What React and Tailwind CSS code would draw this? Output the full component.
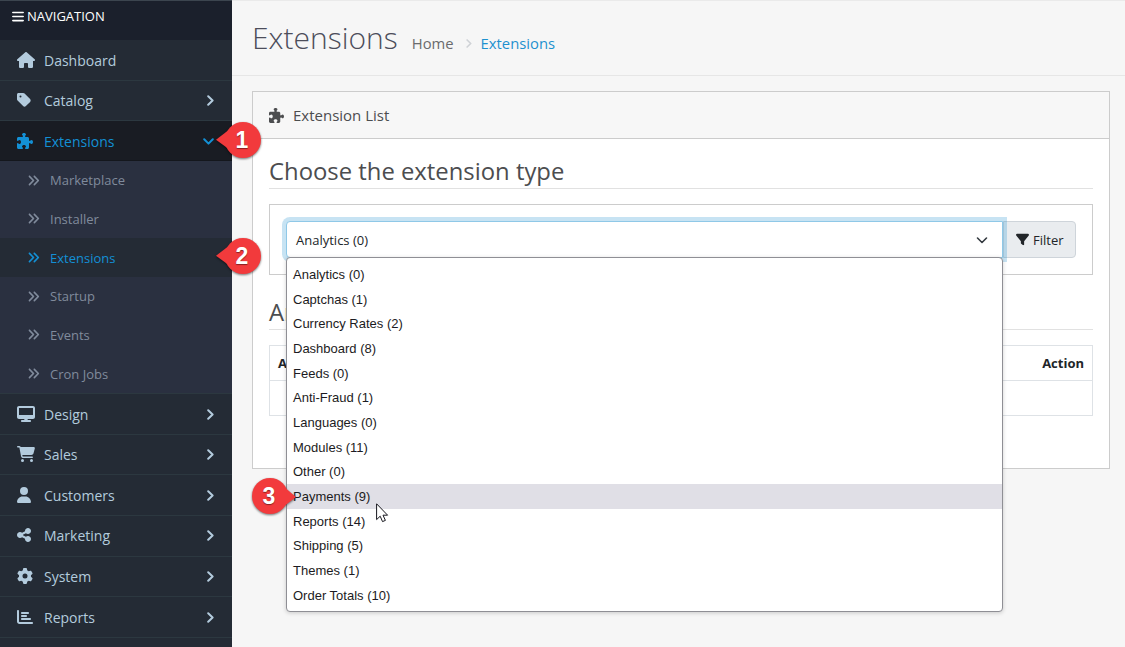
import {
  FaAnglesRight,
  FaBars,
  FaCartShopping,
  FaChartBar,
  FaDesktop,
  FaFilter,
  FaGear,
  FaHouse,
  FaPuzzlePiece,
  FaShareNodes,
  FaTag,
  FaUser,
} from "react-icons/fa6";

const topItems = [
  { label: "Dashboard", icon: FaHouse, size: "w-[18px] h-4", row: "h-[41px] pt-3", leaf: true },
  { label: "Catalog", icon: FaTag, size: "w-[14px] h-4", row: "h-10 pt-[11px]" },
  { label: "Extensions", icon: FaPuzzlePiece, size: "w-4 h-4", row: "h-10 pt-3", open: true },
];

const subItems = [
  { label: "Marketplace", row: "h-[38px]" },
  { label: "Installer", row: "h-[39px]" },
  { label: "Extensions", row: "h-[39px]", active: true },
  { label: "Startup", row: "h-[38px]" },
  { label: "Events", row: "h-[39px]" },
  { label: "Cron Jobs", row: "h-[39px]" },
];

const bottomItems = [
  { label: "Design", icon: FaDesktop, size: "w-[18px] h-4", row: "h-[41px] pt-3" },
  { label: "Sales", icon: FaCartShopping, size: "w-[18px] h-4", row: "h-10 pt-[11px]" },
  { label: "Customers", icon: FaUser, size: "w-[14px] h-4", row: "h-[41px] pt-3" },
  { label: "Marketing", icon: FaShareNodes, size: "w-[14px] h-4", row: "h-[41px] pt-[11px]" },
  { label: "System", icon: FaGear, size: "w-4 h-4", row: "h-10 pt-[11px]" },
  { label: "Reports", icon: FaChartBar, size: "w-4 h-4", row: "h-[41px] pt-3" },
];

const options = [
  "Analytics (0)",
  "Captchas (1)",
  "Currency Rates (2)",
  "Dashboard (8)",
  "Feeds (0)",
  "Anti-Fraud (1)",
  "Languages (0)",
  "Modules (11)",
  "Other (0)",
  "Payments (9)",
  "Reports (14)",
  "Shipping (5)",
  "Themes (1)",
  "Order Totals (10)",
];

function ChevronRight({ className }) {
  return (
    <svg viewBox="0 0 7 11" className={`fill-none stroke-current stroke-2 ${className}`}>
      <path d="M1.2 1.2 L5.6 5.5 L1.2 9.8" strokeLinecap="round" strokeLinejoin="round" />
    </svg>
  );
}

function ChevronDown({ className }) {
  return (
    <svg viewBox="0 0 11 7" className={`fill-none stroke-current stroke-2 ${className}`}>
      <path d="M1.2 1.2 L5.5 5.6 L9.8 1.2" strokeLinecap="round" strokeLinejoin="round" />
    </svg>
  );
}

function NavItem({ item }) {
  const Icon = item.icon;
  return (
    <div
      className={`flex shrink-0 items-start border-b pl-[17px] pr-[18px] ${item.row} ${
        item.open
          ? "border-[#14171d] bg-[#191c23] text-[#1390d5]"
          : "border-[#2c3840] bg-[#242b35] text-[#b3cbdd]"
      }`}
    >
      <span className="flex w-[27px] items-center">
        <Icon className={item.size} preserveAspectRatio="none" />
      </span>
      <span className="-mt-px flex-1 text-[14px] leading-5">{item.label}</span>
      <span className="flex h-4 items-center">
        {item.open ? (
          <ChevronDown className="h-[7px] w-[11px]" />
        ) : (
          !item.leaf && <ChevronRight className="h-[11px] w-[7px]" />
        )}
      </span>
    </div>
  );
}

function Marker({ n, right, className }) {
  return (
    <div className={`absolute h-10 w-[48px] ${className}`}>
      <svg viewBox="0 0 48 40" className="h-10 w-[48px] drop-shadow-[0_1px_1px_rgba(0,0,0,0.55)]">
        <g fill="#f23a3c" transform={right ? "translate(48 0) scale(-1 1)" : undefined}>
          <circle cx="28" cy="19" r="18" />
          <path d={right ? "M2 20 L15 9 L15 30 Z" : "M1 18.8 L15 8 L15 29 Z"} />
        </g>
      </svg>
      <span
        className={`absolute top-[5px] w-9 text-center font-['Liberation_Sans',sans-serif] text-[23px] font-bold leading-7 text-white [text-shadow:0_1px_1px_rgba(0,0,0,0.45)] ${
          right ? "left-[1px]" : "left-[9px]"
        }`}
      >
        {n}
      </span>
    </div>
  );
}

export default function App() {
  return (
    <div className="relative flex h-[647px] w-[1125px] overflow-hidden bg-[#f6f6f6] font-['Open_Sans',sans-serif] text-[#212529]">
      <nav className="flex w-[232px] shrink-0 flex-col bg-[#242b35]">
        <div className="flex h-10 shrink-0 items-center gap-[3px] border-t border-[#3c454f] bg-[#1b202c] pb-[9px] pl-3 text-white">
          <FaBars className="h-[13px] w-3" preserveAspectRatio="none" />
          <span className="text-[13px] leading-4">NAVIGATION</span>
        </div>
        {topItems.map((item) => (
          <NavItem key={item.label} item={item} />
        ))}
        <div className="flex shrink-0 flex-col border-b border-[#2c3840]">
          {subItems.map((item) => (
            <div
              key={item.label}
              className={`flex shrink-0 items-center pl-[27px] text-[13px] leading-5 ${item.row} ${
                item.active ? "bg-[#242b35] text-[#1390d5]" : "bg-[#2a3040] text-[#808b9c]"
              }`}
            >
              <FaAnglesRight className="mr-[10px] h-[13px] w-[13px]" />
              {item.label}
            </div>
          ))}
        </div>
        {bottomItems.map((item) => (
          <NavItem key={item.label} item={item} />
        ))}
      </nav>

      <main className="flex min-w-0 flex-1 flex-col">
        <header className="flex h-[76px] shrink-0 items-center border-b border-t border-b-[#e6e6e6] border-t-[#eaeaea] pl-5">
          <h1 className="text-[30px] font-light leading-9 text-[#4c4d5a]">Extensions</h1>
          <div className="ml-[14px] mt-[9px] flex items-center text-[14.8px] leading-5">
            <span className="text-[#6a6b6d]">Home</span>
            <ChevronRight className="ml-[12px] mr-[9px] mt-px h-[9px] w-[6px] text-[#cfd2d6]" />
            <span className="text-[#1e91cf]">Extensions</span>
          </div>
        </header>

        <section className="ml-5 mr-[15px] mt-[15px] flex h-[378px] flex-col border border-[#ccc] bg-white">
          <div className="flex h-[47px] shrink-0 items-center border-b border-[#ccc] bg-[#f7f7f7] pl-4 text-[15px] text-[#4c4d4f]">
            <FaPuzzlePiece className="mr-[9px] h-[15px] w-[15px]" />
            Extension List
          </div>
          <div className="flex flex-col px-4">
            <h2 className="mt-4 h-[34px] border-b border-[#e1e1e1] text-[23.85px] leading-[33px] text-[#4c4d4f]">
              Choose the extension type
            </h2>
            <div className="mt-[15px] flex h-[71px] items-start border border-[#ccc] p-4">
              <div className="relative z-10 flex h-[37px] w-[717px] items-center justify-between rounded-l-[4px] border border-[#8fc8e7] bg-white pl-[9px] pr-[14px] text-[13px] shadow-[0_0_0_4px_rgba(30,145,207,0.25)]">
                <span className="mt-[2px]">Analytics (0)</span>
                <svg viewBox="0 0 12 12" className="h-3 w-3 fill-none stroke-[#343a40] stroke-[1.6]">
                  <path d="M1.5 4 L6 8.5 L10.5 4" strokeLinecap="round" strokeLinejoin="round" />
                </svg>
              </div>
              <div className="flex h-[37px] w-[73px] items-center gap-1 rounded-r-[4px] border border-[#ced4da] bg-[#e9ecef] pl-3 text-[13px]">
                <FaFilter className="-mt-px h-[13px] w-[13px]" />
                <span className="mt-[2px]">Filter</span>
              </div>
            </div>
            <h2 className="mt-[21px] h-[34px] border-b border-[#e1e1e1] text-[23.85px] leading-[33px] text-[#4c4d4f]">
              Analytics
            </h2>
            <div className="mt-[15px] flex h-[71px] flex-col border border-[#dee2e6]">
              <div className="flex h-[35px] items-center justify-between border-b border-[#dee2e6] px-2 pt-[2px] text-[13px] font-bold">
                <span>Analytics Name</span>
                <span>Action</span>
              </div>
            </div>
          </div>
        </section>
      </main>

      <div className="absolute left-[286px] top-[257px] z-20 h-[355px] w-[717px] rounded-[4px] border border-[#8f8f95] bg-white pt-[4px] font-['Liberation_Sans',sans-serif] text-[13px] text-[#1c1b22] shadow-[0_1px_4px_rgba(0,0,0,0.18)]">
        {options.map((option) => (
          <div
            key={option}
            className={`flex h-[24.68px] items-center pl-[6px] pt-px ${
              option === "Payments (9)" && "bg-[#e0dfe6]"
            }`}
          >
            {option}
          </div>
        ))}
      </div>

      <Marker n="1" className="left-[215px] top-[121px] z-30" />
      <Marker n="2" className="left-[215px] top-[237px] z-30" />
      <Marker n="3" right className="left-[250px] top-[477px] z-30" />

      <svg viewBox="0 0 13 20" className="absolute left-[376px] top-[503px] z-30 h-5 w-[13px]">
        <path
          d="M0.6 0.8 V16.6 L4.2 13.2 L6.5 18.6 L9.4 17.4 L7 12.2 H11.6 Z"
          fill="#fff"
          stroke="#16161d"
          strokeWidth="1"
        />
      </svg>
    </div>
  );
}
